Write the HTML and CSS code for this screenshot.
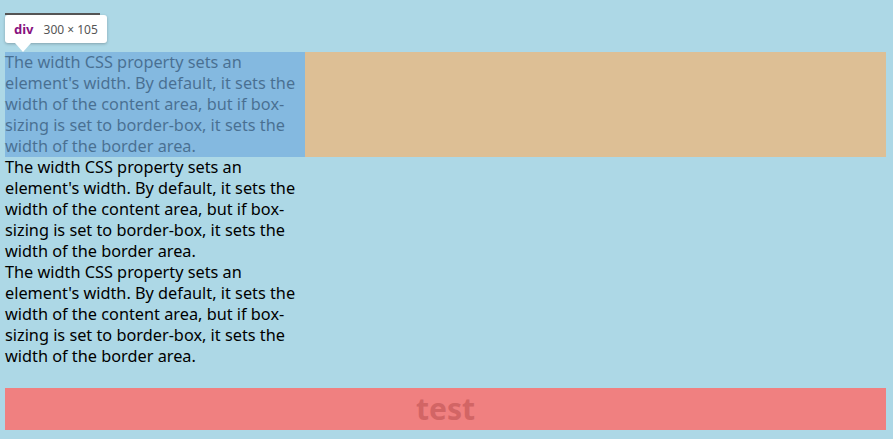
FILE: index.html
```html
<!DOCTYPE html>
<html>
<head>
<meta charset="utf-8">
<link rel="stylesheet" href="styles.css">
</head>
<body>
<div class="page">
  <div class="topline"></div>
  <div class="row">
    <div class="box inspected">The width CSS property sets an element's width. By default, it sets the width of the content area, but if box-sizing is set to border-box, it sets the width of the border area.</div>
  </div>
  <div class="box">The width CSS property sets an element's width. By default, it sets the width of the content area, but if box-sizing is set to border-box, it sets the width of the border area.</div>
  <div class="box">The width CSS property sets an element's width. By default, it sets the width of the content area, but if box-sizing is set to border-box, it sets the width of the border area.</div>
  <div class="test">test</div>
</div>
<div class="tooltip"><span class="tag">div</span><span class="size">300 × 105</span></div>
</body>
</html>
```

FILE: styles.css
```css
html, body {
  margin: 0;
  padding: 0;
  background: #add8e6;
}
body {
  font-family: "Noto Sans", sans-serif;
  font-size: 16.3px;
  line-height: 21px;
  color: #000;
}
.page {
  padding: 0 7px 9px 5px;
}
.topline {
  height: 52px;
}
.row {
  position: relative;
}
.row::after {
  content: "";
  position: absolute;
  left: 300px;
  right: 0;
  top: 0;
  bottom: 0;
  background: rgba(246, 178, 107, 0.66);
}
.box {
  width: 300px;
  height: 105px;
}
.inspected {
  position: relative;
}
.inspected::after {
  content: "";
  position: absolute;
  inset: 0;
  background: rgba(111, 168, 220, 0.66);
}
.test {
  margin-top: 21px;
  height: 42px;
  background: #f08080;
  color: #d26565;
  font-weight: bold;
  font-size: 30px;
  line-height: 42px;
  text-align: center;
}
.tooltip {
  position: absolute;
  left: 5px;
  top: 15px;
  height: 28px;
  width: 102px;
  box-sizing: border-box;
  padding: 0 0 0 9px;
  background: #fff;
  border-radius: 3px;
  box-shadow: 0 1px 3px rgba(0,0,0,0.25);
  display: flex;
  align-items: center;
  gap: 10px;
  font-size: 13px;
  font-family: "Noto Sans", sans-serif;
}
.tooltip::before {
  content: "";
  position: absolute;
  left: 0;
  top: -2px;
  width: 95px;
  height: 2px;
  background: #555;
}
.tooltip::after {
  content: "";
  position: absolute;
  left: 10px;
  top: 28px;
  border-left: 8px solid transparent;
  border-right: 8px solid transparent;
  border-top: 9px solid #fff;
}
.tag {
  color: #881280;
  font-weight: bold;
}
.size {
  color: #555;
  font-size: 12px;
}
```
